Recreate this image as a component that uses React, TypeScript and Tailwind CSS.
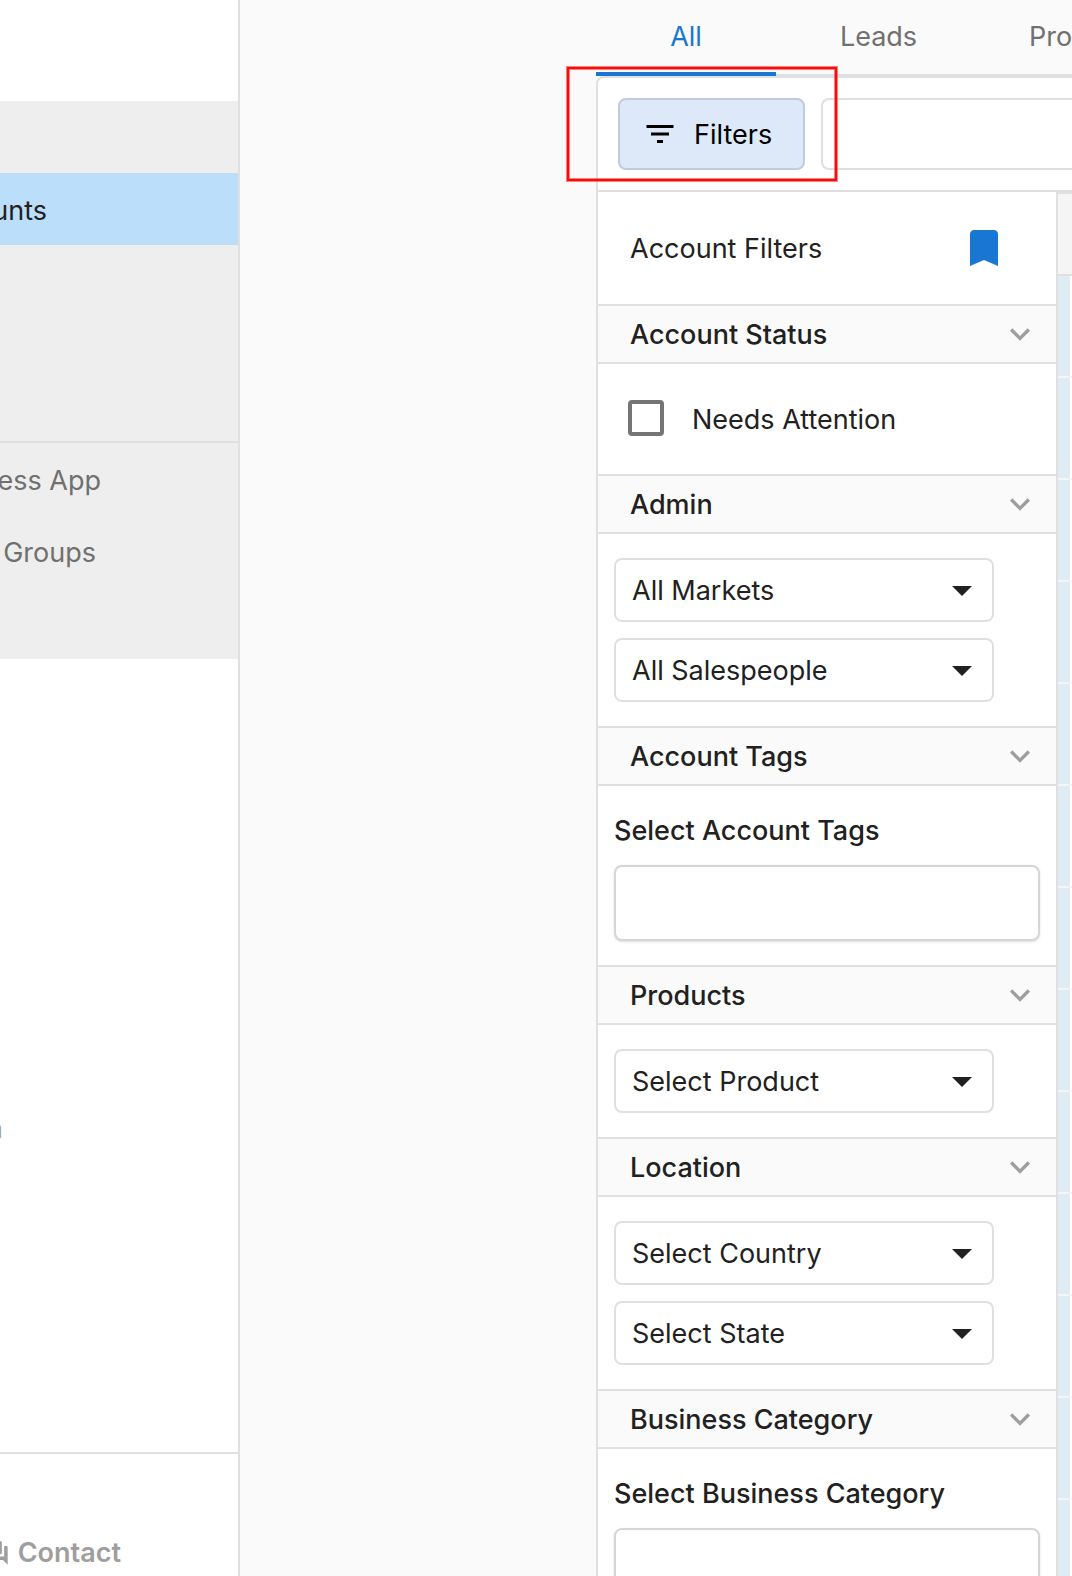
import React, { useId, useState } from "react";

function ChevronDown() {
  return (
    <svg viewBox="0 0 24 24" className="size-10 fill-[#9e9e9e]" aria-hidden="true">
      <path d="M16.59 8.59L12 13.17 7.41 8.59 6 10l6 6 6-6z" />
    </svg>
  );
}

function Section({ title, children }: { title: string; children: React.ReactNode }) {
  const [open, setOpen] = useState(true);
  return (
    <section>
      <h2>
        <button
          type="button"
          aria-expanded={open}
          onClick={() => setOpen(!open)}
          className="flex h-[60px] w-full items-center justify-between border-y-2 border-[#e0e0e0] bg-[#fafafa] pr-4 pl-8 font-medium"
        >
          <span className="pt-0.5">{title}</span>
          <ChevronDown />
        </button>
      </h2>
      {open && children}
    </section>
  );
}

function Dropdown({ label }: { label: string }) {
  return (
    <div className="relative mr-[62px]">
      <select
        aria-label={label}
        className="block h-16 w-full appearance-none rounded-lg border-2 border-[#e0e0e0] bg-white px-4 pt-0.5"
      >
        <option>{label}</option>
      </select>
      <svg
        viewBox="0 0 24 24"
        className="pointer-events-none absolute top-2 right-2 size-12 fill-[#212121]"
        aria-hidden="true"
      >
        <path d="M7 10l5 5 5-5z" />
      </svg>
    </div>
  );
}

function TagField({ label }: { label: string }) {
  const id = useId();
  return (
    <div className="px-4 pt-[25px] pb-6">
      <label htmlFor={id} className="mb-3.5 block leading-10 font-medium">
        {label}
      </label>
      <input
        id={id}
        type="text"
        className="block h-[76px] w-full rounded-lg border-2 border-[#d6d6d6] bg-white px-4 shadow-sm"
      />
    </div>
  );
}

function NavItem({ label, end, active = false }: { label: string; end: string; active?: boolean }) {
  return (
    <a
      href="#"
      className={
        active
          ? "flex h-18 items-center bg-[#bbdefb] pt-1 text-[#212121]"
          : "flex h-18 items-center pt-1 text-[#707070]"
      }
    >
      <span className={"flex justify-end whitespace-nowrap " + end}>{label}</span>
    </a>
  );
}

function Sidebar() {
  return (
    <nav className="flex w-60 shrink-0 flex-col overflow-hidden border-r-2 border-[#e0e0e0] bg-white">
      <div className="mt-[101px] bg-[#eeeeee] pt-18 pb-18">
        <NavItem label="Accounts" end="w-[47px]" active />
        <div className="mt-[196px] border-t-2 border-[#e0e0e0]">
          <NavItem label="Business App" end="w-[101px]" />
          <NavItem label="Account Groups" end="w-24" />
        </div>
      </div>
      <div className="mt-[434px] flex h-18 items-center text-[#9e9e9e]">
        <span className="flex w-[3px] justify-end">n</span>
      </div>
      <div className="mt-auto h-[124px] border-t-2 border-[#e0e0e0] pt-[79px]">
        <a href="#" className="flex h-10 w-[121px] items-center justify-end gap-2 font-semibold text-[#9e9e9e]">
          <svg viewBox="0 0 24 24" className="size-7 shrink-0 fill-current" aria-hidden="true">
            <path d="M21 6h-2v9H6v2c0 .55.45 1 1 1h11l4 4V7c0-.55-.45-1-1-1zm-4 6V3c0-.55-.45-1-1-1H3c-.55 0-1 .45-1 1v14l4-4h10c.55 0 1-.45 1-1z" />
          </svg>
          Contact
        </a>
      </div>
    </nav>
  );
}

const rows = Array.from({ length: 13 }, (_, i) => i);

export default function App() {
  return (
    <div className="flex h-screen overflow-hidden bg-[#fafafa] font-['Inter',sans-serif] text-[27px] leading-10 text-[#212121]">
      <Sidebar />
      <main className="relative ml-[356px] flex min-w-0 flex-1 flex-col">
        <div role="tablist" className="flex h-[76px] shrink-0 border-b-2 border-[#e0e0e0] text-[#707070]">
          <button
            role="tab"
            aria-selected="true"
            className="h-[76px] w-[180px] shrink-0 border-b-4 border-[#1976d2] pt-0.5 text-[#1976d2]"
          >
            All
          </button>
          <button role="tab" aria-selected="false" className="h-[76px] w-[205px] shrink-0 border-b-4 border-transparent pt-0.5">
            Leads
          </button>
          <button role="tab" aria-selected="false" className="h-[76px] shrink-0 border-b-4 border-transparent px-12 pt-0.5">
            Prospects
          </button>
        </div>

        <div className="flex min-h-0 flex-1 flex-col overflow-hidden rounded-tl-lg border-t-2 border-l-2 border-[#e0e0e0] bg-white">
          <div className="flex h-[114px] shrink-0 gap-4 border-b-2 border-[#e0e0e0] py-5 pl-5">
            <button
              type="button"
              className="flex w-[187px] shrink-0 items-center gap-4 rounded-lg border-2 border-[#bfccdb] bg-[#dde8f8] pl-[22px] text-black"
            >
              <svg viewBox="0 0 24 24" className="size-9 fill-current" aria-hidden="true">
                <path d="M10 18h4v-2h-4v2zM3 6v2h18V6H3zm3 7h12v-2H6v2z" />
              </svg>
              <span className="pt-0.5">Filters</span>
            </button>
            <input
              type="search"
              aria-label="Search accounts"
              className="min-w-0 flex-1 rounded-l-lg border-2 border-r-0 border-[#e0e0e0] bg-white px-4"
            />
          </div>

          <div className="flex min-h-0 flex-1">
            <aside className="w-[460px] shrink-0 overflow-hidden border-r-2 border-[#e0e0e0] bg-white">
              <header className="flex h-28 items-center justify-between pr-12 pl-8">
                <h1 className="pt-0.5">Account Filters</h1>
                <button type="button" aria-label="Saved filters">
                  <svg viewBox="0 0 24 24" className="size-12 fill-[#1976d2]" aria-hidden="true">
                    <path d="M17 3H7c-1.1 0-1.99.9-1.99 2L5 21l7-3 7 3V5c0-1.1-.9-2-2-2z" />
                  </svg>
                </button>
              </header>
              <Section title="Account Status">
                <label className="flex h-[110px] items-center gap-7 pb-0.5 pl-[30px]">
                  <input
                    type="checkbox"
                    className="size-9 appearance-none rounded-sm border-4 border-[#757575] bg-white"
                  />
                  <span className="pt-1">Needs Attention</span>
                </label>
              </Section>
              <Section title="Admin">
                <div className="flex flex-col gap-4 py-6 pl-4">
                  <Dropdown label="All Markets" />
                  <Dropdown label="All Salespeople" />
                </div>
              </Section>
              <Section title="Account Tags">
                <TagField label="Select Account Tags" />
              </Section>
              <Section title="Products">
                <div className="py-6 pl-4">
                  <Dropdown label="Select Product" />
                </div>
              </Section>
              <Section title="Location">
                <div className="flex flex-col gap-4 py-6 pl-4">
                  <Dropdown label="Select Country" />
                  <Dropdown label="Select State" />
                </div>
              </Section>
              <Section title="Business Category">
                <TagField label="Select Business Category" />
              </Section>
            </aside>
            <div className="min-w-0 flex-1 bg-white">
              <div className="h-[84px] border-y-2 border-[#e0e0e0] bg-[#f5f5f5]" />
              {rows.map((row) => (
                <div key={row} className="h-[102px] border-b-2 border-[#f5f5f5] pr-0.5">
                  <div className="h-full bg-[#dfecf4]" />
                </div>
              ))}
            </div>
          </div>
        </div>

        <div className="pointer-events-none absolute top-[67px] -left-[29px] h-[114px] w-[270px] border-2 border-[#f80c0c] shadow-[0_0_0_1px_rgba(255,0,0,0.5),inset_0_0_0_1px_rgba(255,0,0,0.5)]" />
      </main>
    </div>
  );
}
